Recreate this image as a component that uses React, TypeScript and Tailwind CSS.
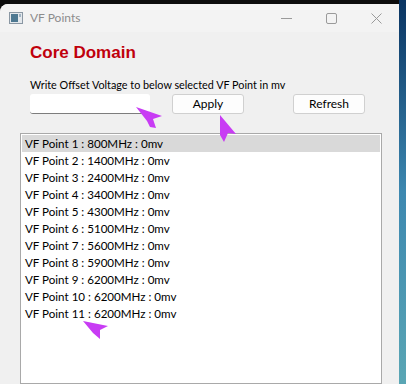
import React from "react";

const points = [
  "VF Point 1 : 800MHz : 0mv",
  "VF Point 2 : 1400MHz : 0mv",
  "VF Point 3 : 2400MHz : 0mv",
  "VF Point 4 : 3400MHz : 0mv",
  "VF Point 5 : 4300MHz : 0mv",
  "VF Point 6 : 5100MHz : 0mv",
  "VF Point 7 : 5600MHz : 0mv",
  "VF Point 8 : 5900MHz : 0mv",
  "VF Point 9 : 6200MHz : 0mv",
  "VF Point 10 : 6200MHz : 0mv",
  "VF Point 11 : 6200MHz : 0mv",
];

function Cursor({ points }: { points: string }) {
  return (
    <svg className="pointer-events-none absolute left-0 top-0" width="406" height="384" viewBox="0 0 406 384">
      <polygon points={points} fill="#c83cf4" />
    </svg>
  );
}

export default function App() {
  return (
    <div className="relative flex h-[384px] w-[406px] overflow-hidden bg-[#0c0c0c] font-['Lato',sans-serif]">
      <div className="flex w-[399px] flex-col pt-[4px]">
        <div className="flex flex-1 flex-col rounded-tl-[8px] bg-[#f0f0f0]">
          {/* title bar */}
          <div className="flex h-[28px] items-center rounded-tl-[8px] bg-[#f3f3f3] pl-[9px]">
            <svg width="14" height="12" viewBox="0 0 14 12">
              <rect x="0.5" y="0.5" width="13" height="11" fill="#e4e8ec" stroke="#8a97a3" />
              <rect x="2" y="2" width="7" height="8" fill="#4d7891" />
              <rect x="10" y="2" width="2" height="3" fill="#9fb3c2" />
            </svg>
            <span className="ml-[7px] text-[12px] text-[#8c8c8c]">VF Points</span>
            <div className="ml-auto flex items-center gap-[34px] pr-[17px] text-[#9a9a9a]">
              <svg width="11" height="11" viewBox="0 0 11 11">
                <line x1="0" y1="5.5" x2="11" y2="5.5" stroke="currentColor" />
              </svg>
              <svg width="11" height="11" viewBox="0 0 11 11">
                <rect x="0.5" y="0.5" width="10" height="10" rx="1.5" fill="none" stroke="currentColor" />
              </svg>
              <svg width="11" height="11" viewBox="0 0 11 11">
                <path d="M0.5 0.5L10.5 10.5M10.5 0.5L0.5 10.5" stroke="currentColor" />
              </svg>
            </div>
          </div>

          {/* content */}
          <div className="flex flex-1 flex-col">
            <h1 className="ml-[30px] mt-[11px] font-['Liberation_Sans',sans-serif] text-[17px] leading-[20px] font-bold text-[#c0000c]">
              Core Domain
            </h1>
            <p className="ml-[30px] mt-[15px] text-[10.8px] leading-[14px] text-black">
              Write Offset Voltage to below selected VF Point in mv
            </p>
            <div className="mt-[2px] flex items-center">
              <div className="ml-[30px] h-[20px] w-[120px] rounded-[3px] border-b border-b-[#7d7d7d] bg-white" />
              <button className="ml-[22px] h-[20px] w-[72px] rounded-[3px] border border-[#d0d0d0] bg-[#fdfdfd] text-[12px] text-black">
                Apply
              </button>
              <button className="ml-[49px] h-[20px] w-[72px] rounded-[3px] border border-[#d0d0d0] bg-[#fdfdfd] text-[12px] text-black">
                Refresh
              </button>
            </div>
            <div className="ml-[20px] mt-[19px] w-[362px] flex-1 border border-[#a9a9a9] bg-white p-[1px]">
              {points.map((p, i) => (
                <div
                  key={p}
                  className={`h-[17px] pl-[3px] text-[11.6px] leading-[17px] text-black ${i === 0 ? "bg-[#d9d9d9]" : ""}`}
                >
                  {p}
                </div>
              ))}
            </div>
          </div>
        </div>
      </div>
      <div className="w-[7px] bg-gradient-to-b from-[#0a3462] via-[#3d88b0] to-[#5aa6b4]" />

      <Cursor points="136,107 162,116 153,119 156,128 150,127 147,121" />
      <Cursor points="220,115 236,134 228,133 224,142 220,135" />
      <Cursor points="83,321 108,326 100,330 100,339 93,333" />
    </div>
  );
}
